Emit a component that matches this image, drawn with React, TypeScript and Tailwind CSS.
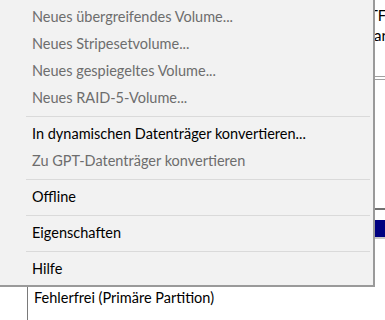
import React from "react";

type Item = { label: string; disabled?: boolean } | "sep";

const items: Item[] = [
  { label: "Neues übergreifendes Volume...", disabled: true },
  { label: "Neues Stripesetvolume...", disabled: true },
  { label: "Neues gespiegeltes Volume...", disabled: true },
  { label: "Neues RAID-5-Volume...", disabled: true },
  "sep",
  { label: "In dynamischen Datenträger konvertieren..." },
  { label: "Zu GPT-Datenträger konvertieren", disabled: true },
  "sep",
  { label: "Offline" },
  "sep",
  { label: "Eigenschaften" },
  "sep",
  { label: "Hilfe" },
];

const font = { fontFamily: 'Lato, "Noto Sans", sans-serif' };

export default function App() {
  return (
    <div className="relative w-[385px] h-[320px] overflow-hidden bg-white" style={font}>
      {/* background window content */}
      <div className="flex flex-col">
        <div className="flex h-[287px]">
          <div className="w-[375px] shrink-0" />
          <div className="flex flex-col flex-1 text-[15px] text-black">
            <div className="h-[26px] pt-[6px] leading-[18px] -ml-[6px] whitespace-nowrap">TF</div>
            <div className="h-[22px] leading-[18px] -ml-[1px] whitespace-nowrap">ar</div>
            <div className="h-[28px]" />
            <div className="h-[4px] border-y border-[#a0a0a0]" />
            <div className="h-[128px]" />
            <div className="h-[2px] bg-[#707070]" />
            <div className="h-[10px]" />
            <div className="h-[17px] bg-[#000080]" />
            <div className="h-[2px] bg-[#c8c8c8]" />
          </div>
        </div>
        <div className="ml-[27px] border-l border-[#7a7a7a] h-[33px] pl-[6px] text-[14.5px] leading-[20px] pt-[1px] text-black">
          Fehlerfrei (Primäre Partition)
        </div>
      </div>

      {/* context menu */}
      <div className="absolute left-0 top-0 w-[375px] h-[287px] bg-[#f2f2f2] border-r-2 border-b-2 border-[#9a9a9a] pt-[4px]">
        {items.map((it, i) =>
          it === "sep" ? (
            <div key={i} className="ml-[26px] mr-[3px] my-[4px] h-px bg-[#dadada]" />
          ) : (
            <div
              key={i}
              className={`h-[27px] pl-[32px] flex items-center text-[14.5px] leading-none ${
                it.disabled ? "text-[#6d6d6d]" : "text-black"
              }`}
            >
              {it.label}
            </div>
          )
        )}
      </div>
    </div>
  );
}
